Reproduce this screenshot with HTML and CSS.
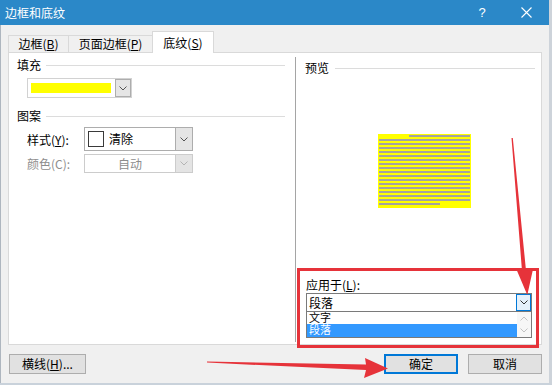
FILE: index.html
```html
<!DOCTYPE html>
<html lang="zh-CN">
<head>
  <meta charset="UTF-8">
  <title>边框和底纹</title>
  <link rel="stylesheet" href="styles.css">
</head>
<body>
  <div class="window">
    <header class="titlebar">
      <span class="title">边框和底纹</span>
      <span class="help">?</span>
      <span class="close">
        <svg width="11" height="11" viewBox="0 0 11 11"><path d="M0.5 0.5L10.5 10.5M10.5 0.5L0.5 10.5" stroke="#fff" stroke-width="1.1"/></svg>
      </span>
    </header>

    <div class="client">
      <nav class="tabs">
        <div class="tab t-border">边框(<u>B</u>)</div>
        <div class="tab t-page">页面边框(<u>P</u>)</div>
        <div class="tab t-shade active">底纹(<u>S</u>)</div>
      </nav>

      <section class="panel">
        <div class="col-left">
          <div class="group"><span>填充</span><i></i></div>
          <div class="combo fill">
            <span class="swatch"></span>
            <span class="drop"><svg width="8" height="5" viewBox="0 0 8 5"><path d="M0.5 0.5L4 4L7.5 0.5" fill="none" stroke="#555"/></svg></span>
          </div>

          <div class="group pattern"><span>图案</span><i></i></div>
          <div class="field style-row">
            <label>样式(<u>Y</u>):</label>
            <div class="combo style">
              <span class="box"></span>
              <span class="val">清除</span>
              <span class="drop"><svg width="8" height="5" viewBox="0 0 8 5"><path d="M0.5 0.5L4 4L7.5 0.5" fill="none" stroke="#555"/></svg></span>
            </div>
          </div>
          <div class="field color-row disabled">
            <label>颜色(C):</label>
            <div class="combo color">
              <span class="val">自动</span>
              <span class="drop"><svg width="8" height="5" viewBox="0 0 8 5"><path d="M0.5 0.5L4 4L7.5 0.5" fill="none" stroke="#b4b4b4"/></svg></span>
            </div>
          </div>
        </div>

        <div class="divider"></div>

        <div class="col-right">
          <div class="group"><span>预览</span><i></i></div>
          <div class="preview">
            <div class="ln first"></div>
            <div class="ln"></div><div class="ln"></div><div class="ln"></div>
            <div class="ln"></div><div class="ln"></div><div class="ln"></div>
            <div class="ln"></div><div class="ln"></div><div class="ln"></div>
            <div class="ln"></div><div class="ln"></div><div class="ln"></div>
            <div class="ln"></div><div class="ln"></div><div class="ln"></div>
            <div class="ln"></div>
            <div class="ln last"></div>
          </div>

          <div class="apply">
            <label>应用于(<u>L</u>):</label>
            <div class="combo apply-combo">
              <span class="val">段落</span>
              <span class="drop hot"><svg width="8" height="5" viewBox="0 0 8 5"><path d="M0.5 0.5L4 4L7.5 0.5" fill="none" stroke="#333"/></svg></span>
            </div>
            <div class="list">
              <ul class="items">
                <li>文字</li>
                <li class="sel">段落</li>
              </ul>
              <div class="scroll">
                <svg width="8" height="5" viewBox="0 0 8 5"><path d="M0.5 4.5L4 1L7.5 4.5" fill="none" stroke="#c2c2c2"/></svg>
                <svg width="8" height="5" viewBox="0 0 8 5"><path d="M0.5 0.5L4 4L7.5 0.5" fill="none" stroke="#c2c2c2"/></svg>
              </div>
            </div>
          </div>
        </div>
      </section>

      <footer class="buttons">
        <div class="btn hline">横线(<u>H</u>)...</div>
        <div class="btn ok">确定</div>
        <div class="btn cancel">取消</div>
      </footer>
    </div>

    <!-- annotation overlay -->
    <div class="mark-box"></div>
    <svg class="marks" width="552" height="385" viewBox="0 0 552 385">
      <polygon points="511.5,138 512.8,138 526,270.5 533,269.3 527.3,295 517,270.7 522,271" fill="#e6333a"/>
      <polygon points="207,361.5 366,364.5 365,358 388,368.5 364,378 366,370 207,362.6" fill="#e6333a"/>
    </svg>
  </div>
</body>
</html>
```

FILE: styles.css
```css
:root {
  --blue: #2b88c8;
  --bg: #f0f0f0;
  --tab-border: #d9d9d9;
  --ctl-border: #adadad;
  --btn-bg: #e1e1e1;
  --gray-text: #8d8d8d;
  --rule: #dcdcdc;
  --mark: #e6333a;
}
*, *::before, *::after { box-sizing: border-box; }
body {
  margin: 0;
  font-family: "Noto Sans CJK SC", "Noto Sans", sans-serif;
  font-size: 12px;
  color: #000;
}
u { text-underline-offset: 1px; }

.window {
  position: relative;
  width: 552px; height: 385px;
  background: var(--bg);
  border-right: 3px solid #cdd3da;
  border-bottom: 2px solid #c9d2db;
  overflow: hidden;
}

/* title bar */
.titlebar {
  height: 25px;
  background: var(--blue);
  color: #fff;
  display: flex; align-items: center;
  padding-left: 5px;
}
.titlebar .title { flex: 1; line-height: 25px; }
.titlebar .help {
  width: 8px; margin-right: 35px;
  font-family: "Liberation Sans", sans-serif; font-size: 13px;
  text-align: center;
}
.titlebar .close { width: 11px; height: 11px; margin-right: 17px; display: flex; }

.client { padding-top: 6px; box-shadow: inset 1px 0 0 #aeb6bf; height: 358px; }

/* tabs */
.tabs {
  display: flex; align-items: flex-end;
  height: 21px; padding-left: 8px;
  position: relative; z-index: 1;
}
.tab {
  height: 17px; line-height: 16px;
  border: 1px solid var(--tab-border); border-bottom: none;
  background: var(--bg);
  text-align: center;
}
.tab + .tab { margin-left: -1px; }
.t-border { width: 61px; }
.t-page { width: 85px; }
.t-shade { width: 62px; }
.tab.active {
  height: 22px; line-height: 21px;
  margin-bottom: -1px;
  background: #fff;
}

/* main panel */
.panel {
  margin-left: 8px;
  width: 534px; height: 293px;
  border: 1px solid var(--tab-border);
  background: #fff;
  display: flex;
}
.group { display: flex; align-items: center; height: 14px; line-height: 14px; }
.group i { flex: 1; height: 1px; background: var(--rule); margin-left: 5px; }

.col-left { width: 286px; padding: 5px 10px 0 8px; }
.divider { width: 1px; background: #a5a5a5; margin: 4px 0 2px; }
.col-right {
  flex: 1;
  display: flex; flex-direction: column;
  padding: 8px 6px 6px 9px;
}
.col-right .group i { margin-left: 6px; }

/* combos */
.combo {
  display: flex; align-items: center;
  border: 1px solid var(--ctl-border);
  background: #fff;
  line-height: 14px;
}
.combo .drop {
  margin-left: auto; width: 16px; align-self: stretch;
  background: #e5e5e5; border-left: 1px solid var(--ctl-border);
  display: flex; align-items: center; justify-content: center;
}
.combo.fill {
  margin: 6px 0 0 10px;
  width: 105px; height: 20px;
  border-color: #d2d2d2;
}
.combo.fill .drop { border: 1px solid var(--ctl-border); }
.swatch { width: 80px; height: 10px; margin-left: 3px; background: #ffff00; }

.group.pattern { margin-top: 11px; }
.field { display: flex; align-items: center; margin-left: 10px; }
.field label { width: 57px; }
.style-row { margin-top: 4px; }
.combo.style { width: 109px; height: 24px; }
.combo.style .drop { width: 17px; }
.combo .box { width: 16px; height: 16px; margin-left: 3px; border: 1px solid #3a3a3a; }
.combo.style .val { margin-left: 5px; }
.color-row { margin-top: 3px; color: var(--gray-text); }
.combo.color { width: 109px; height: 19px; border-color: #cccccc; }
.combo.color .val { flex: 1; text-align: center; }
.combo.color .drop { background: #e4e4e4; border-left-color: #cccccc; width: 17px; }

/* preview */
.preview {
  margin: 59px 0 0 73px;
  width: 93px; height: 74px;
  background: #ffff00;
  padding: 1px;
  display: flex; flex-direction: column; gap: 2px;
}
.preview .ln { height: 2px; background: #a3a3a3; }
.preview .ln.first { margin-left: 30px; }
.preview .ln.last { width: 61px; }

/* apply to */
.apply { margin-top: auto; margin-left: 1px; margin-right: 3px; }
.apply label { display: block; height: 14px; line-height: 14px; }
.combo.apply-combo { margin-top: 1px; height: 19px; border-color: #7a7a7a; }
.apply-combo .val { padding-left: 2px; }
.apply-combo .drop.hot {
  width: 15px;
  background: #e5f1fb;
  border: 1px solid #0078d7;
}
.list {
  display: flex;
  height: 26px;
  border: 1px solid #7a7a7a; border-top: none;
}
.items {
  flex: 1; margin: 0; padding: 0; list-style: none;
  font-family: "Liberation Sans", "Noto Sans CJK SC", sans-serif;
  font-size: 11px;
}
.items li { height: 12px; line-height: 12px; padding-left: 2px; }
.items li.sel { height: 13px; line-height: 13px; background: #3399ff; color: #fff; }
.scroll {
  width: 14px;
  background: #f7f7f7;
  display: flex; flex-direction: column; align-items: center; justify-content: space-around;
}
.scroll svg { display: block; }

/* footer buttons */
.buttons { display: flex; padding: 9px 7px 0 9px; }
.btn {
  height: 20px; width: 77px;
  border: 1px solid var(--ctl-border);
  background: var(--btn-bg);
  line-height: 18px; text-align: center;
}
.btn.ok {
  margin-left: auto; width: 74px;
  border: 2px solid #0078d7;
  line-height: 16px;
}
.btn.cancel { margin-left: 10px; width: 74px; }

/* red annotation */
.mark-box {
  position: absolute; left: 297px; top: 268px;
  width: 242px; height: 80px;
  border: 3px solid var(--mark);
}
.marks { position: absolute; left: 0; top: 0; pointer-events: none; }
```
